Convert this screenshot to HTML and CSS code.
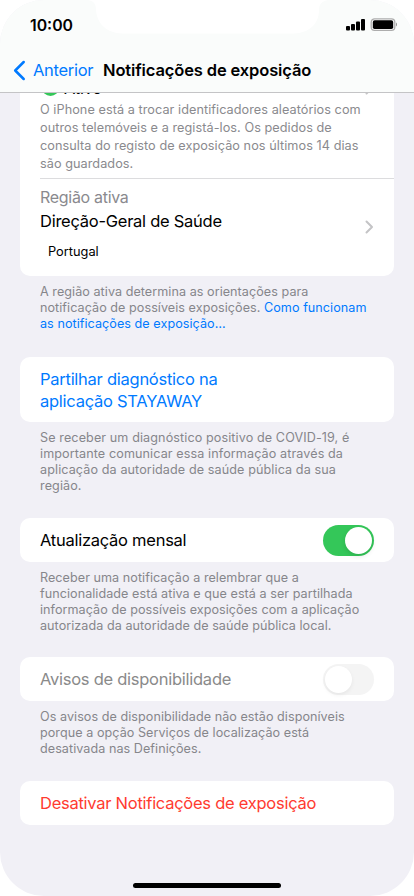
FILE: index.html
```html
<!DOCTYPE html>
<html lang="pt">
  <head>
    <meta charset="UTF-8" />
    <meta name="viewport" content="width=device-width, initial-scale=1.0" />
    <title>Notificações de exposição</title>
    <link rel="stylesheet" href="styles.css">
  </head>
  <body>
    <div class="phone">
      <header class="header">
        <div class="statusbar">
          <span class="time">10:00</span>
          <svg class="status-icons" width="52" height="14" viewBox="0 0 52 14">
            <rect x="0" y="8" width="4" height="4.5" rx="1" />
            <rect x="5" y="6" width="4" height="6.5" rx="1" />
            <rect x="10" y="3.5" width="4" height="9" rx="1" />
            <rect x="15" y="1" width="4" height="11.5" rx="1" />
            <rect x="25.2" y="0.8" width="23.6" height="11.6" rx="3.4" fill="#fff" stroke="#adadad" stroke-width="1.3" />
            <rect x="26.8" y="2.2" width="20.4" height="8.8" rx="1.8" />
            <path d="M50 4.6v4c1.3-.5 1.3-3.5 0-4z" fill="#8e8e8e" />
          </svg>
        </div>
        <div class="navbar">
          <svg class="back-icon" width="13" height="21" viewBox="0 0 13 21">
            <path d="M10.7 2L2.2 10.5L10.7 19" fill="none" stroke="#007aff" stroke-width="2.5" stroke-linecap="round" stroke-linejoin="round" />
          </svg>
          <span class="back">Anterior</span>
          <h1 class="title">Notificações de exposição</h1>
        </div>
      </header>

      <main class="content">
        <section class="card card-first">
          <div class="status-row">
            <span class="dot"></span>
            <span class="status-name">Ativo</span>
            <svg class="chevron" width="9" height="14" viewBox="0 0 9 14">
              <path d="M1.5 1.5L7 7L1.5 12.5" />
            </svg>
          </div>
          <p class="description">O iPhone está a trocar identificadores aleatórios com<br>outros telemóveis e a registá-los. Os pedidos de<br>consulta do registo de exposição nos últimos 14 dias<br>são guardados.</p>
          <div class="region">
            <div>
              <div class="region-label">Região ativa</div>
              <div class="region-name">Direção-Geral de Saúde</div>
              <div class="country">Portugal</div>
            </div>
            <svg class="chevron" width="9" height="14" viewBox="0 0 9 14">
              <path d="M1.5 1.5L7 7L1.5 12.5" />
            </svg>
          </div>
        </section>
        <p class="note note-region">A região ativa determina as orientações para<br>notificação de possíveis exposições. <span class="link">Como funcionam<br>as notificações de exposição…</span></p>

        <section class="card row row-tall blue"><span>Partilhar diagnóstico na<br>aplicação STAYAWAY</span></section>
        <p class="note note-share">Se receber um diagnóstico positivo de COVID-19, é<br>importante comunicar essa informação através da<br>aplicação da autoridade de saúde pública da sua<br>região.</p>

        <section class="card row">
          <span>Atualização mensal</span>
          <span class="switch on"><span class="knob"></span></span>
        </section>
        <p class="note">Receber uma notificação a relembrar que a<br>funcionalidade está ativa e que está a ser partilhada<br>informação de possíveis exposições com a aplicação<br>autorizada da autoridade de saúde pública local.</p>

        <section class="card row disabled">
          <span>Avisos de disponibilidade</span>
          <span class="switch"><span class="knob"></span></span>
        </section>
        <p class="note note-alerts">Os avisos de disponibilidade não estão disponíveis<br>porque a opção Serviços de localização está<br>desativada nas Definições.</p>

        <section class="card row red">Desativar Notificações de exposição</section>
      </main>

      <svg class="notch" width="240" height="34" viewBox="0 0 240 34">
        <path d="M0 0C6 1 8 4 8 10C9 24 19 33 34 33.5H206C221 33 231 24 231 10C231 4 234 1 240 0Z" fill="#fff" />
      </svg>
      <div class="home-bar"></div>
    </div>
  </body>
</html>
```
FILE: styles.css
```css
* {
  box-sizing: border-box;
}

body {
  margin: 0;
  background: #fff;
  font-family: Inter, "Liberation Sans", sans-serif;
}
.phone {
  position: relative;
  width: 414px;
  height: 896px;
  overflow: hidden;
  background: #f1f0f6;
  border-radius: 44px;
}

/* header */
.header {
  position: relative;
  z-index: 1;
  height: 93px;
  background: #fafcfb;
  border-bottom: 1px solid #c4c4c6;
}
.statusbar {
  display: flex;
  justify-content: space-between;
  height: 48px;
  padding: 16px 16px 0 30px;
}
.time {
  font-size: 15.8px;
  line-height: 20px;
  font-weight: 600;
}
.status-icons {
  margin-top: 2px;
}
.navbar {
  display: flex;
  align-items: center;
  height: 44px;
  padding-left: 13px;
}
.back {
  width: 70px;
  margin-left: 7px;
  font-size: 16.5px;
  letter-spacing: -0.3px;
  color: #007aff;
}
.title {
  margin: 0;
  font-size: 16.5px;
  font-weight: 600;
  letter-spacing: -0.13px;
  white-space: nowrap;
}

/* grouped cards */
.content {
  padding: 0 20px;
}
.card {
  background: #fff;
  border-radius: 10px;
  font-size: 16.5px;
  letter-spacing: -0.26px;
  white-space: nowrap;
}
.card-first {
  height: 207px;
  margin-top: -24px;
  padding-left: 20px;
}
.status-row {
  display: flex;
  align-items: center;
  height: 32px;
  padding: 4px 20px 0 2px;
}
.dot {
  width: 17px;
  height: 17px;
  margin-right: 5px;
  border-radius: 50%;
  background: #34c759;
}
.status-name {
  flex: 1;
  padding-top: 2px;
}
.status-row .chevron {
  margin-top: 2px;
}
.description {
  margin: 0;
  height: 78px;
  font-size: 12.7px;
  line-height: 18px;
  letter-spacing: 0.05px;
  color: #8a8a8e;
  border-bottom: 1px solid #dcdcde;
}
.region {
  display: flex;
  align-items: center;
  justify-content: space-between;
  height: 96px;
  padding-right: 20px;
}
.region-label {
  line-height: 24px;
  font-size: 16px;
  letter-spacing: -0.3px;
  color: #8a8a8e;
}
.region-name {
  line-height: 24px;
}
.country {
  margin: 7px 0 6px;
  padding-left: 8px;
  font-size: 12.8px;
  line-height: 24px;
  letter-spacing: 0;
}
.chevron path {
  fill: none;
  stroke: #c4c4c6;
  stroke-width: 2;
  stroke-linecap: round;
  stroke-linejoin: round;
}
.note {
  margin: 8px 20px 23px;
  font-size: 12.6px;
  line-height: 16px;
  letter-spacing: 0.05px;
  color: #86868b;
  white-space: nowrap;
}
.note-region {
  margin-bottom: 25px;
}
.note-share {
  margin-bottom: 24px;
  letter-spacing: 0.1px;
}
.note-alerts {
  margin-bottom: 23.5px;
}
.link {
  color: #007aff;
}
.row {
  display: flex;
  align-items: center;
  justify-content: space-between;
  height: 44px;
  padding: 0 20px;
}
.row-tall {
  height: 65px;
  line-height: 22px;
}
.blue {
  color: #007aff;
}
.red {
  color: #ff3b30;
}
.disabled {
  color: #8a8a8a;
}

/* switch */
.switch {
  display: flex;
  width: 51px;
  height: 31px;
  padding: 2px;
  border-radius: 16px;
  background: #f4f4f4;
}
.switch.on {
  justify-content: flex-end;
  background: #34c759;
}
.knob {
  width: 27px;
  height: 27px;
  border-radius: 50%;
  background: #fff;
  box-shadow: 0 2px 5px rgba(0, 0, 0, 0.12);
}
.disabled .knob {
  box-shadow: 0 2px 4px rgba(0, 0, 0, 0.06);
}

/* device parts */
.notch {
  position: absolute;
  z-index: 2;
  top: 0;
  left: 88px;
}
.home-bar {
  position: absolute;
  left: 133px;
  bottom: 8px;
  width: 148px;
  height: 5px;
  border-radius: 3px;
  background: #000;
}
```
